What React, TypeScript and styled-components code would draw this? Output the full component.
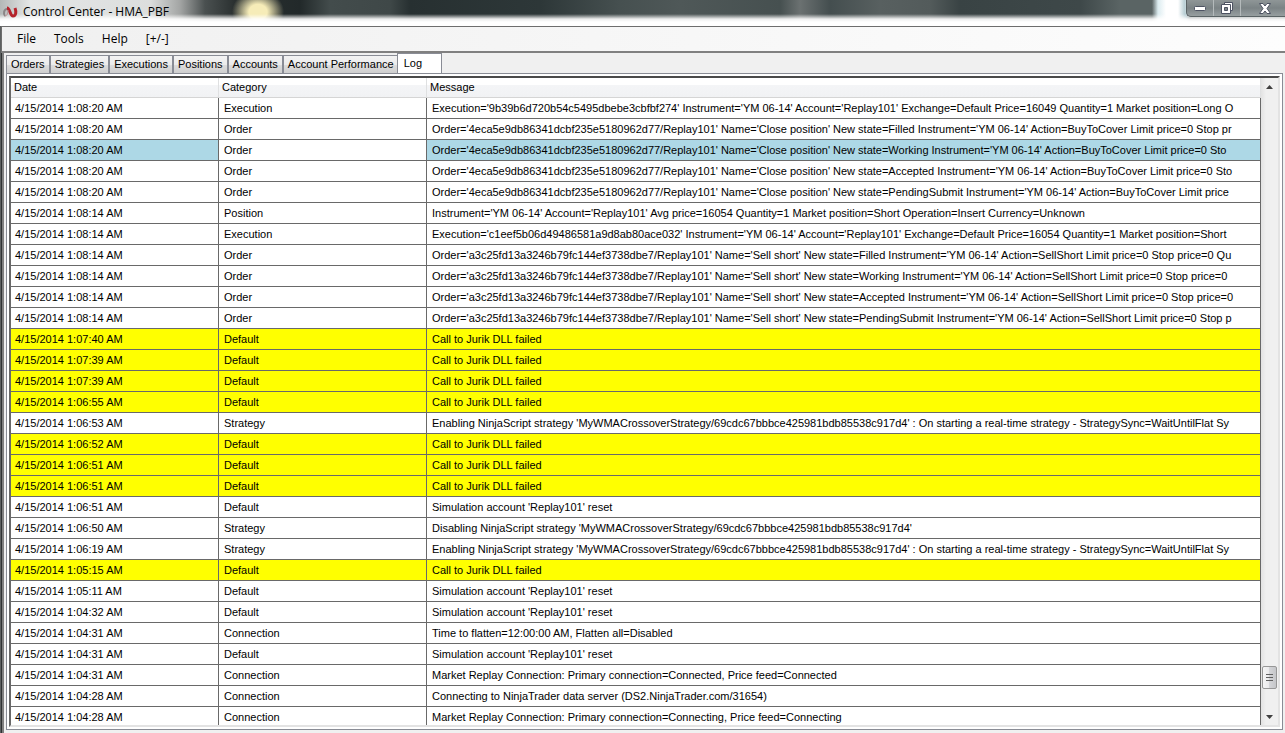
import React from 'react';
import styled, { createGlobalStyle } from 'styled-components';

const Global = createGlobalStyle`
  * { box-sizing: border-box; }
  html, body { margin: 0; padding: 0; }
  button { font: inherit; color: inherit; }
`;

const Window = styled.div`
  display: flex;
  flex-direction: column;
  height: 100vh;
  background: linear-gradient(to right, #8a8d8d 0, #2f3233 1px, #2f3233 2px, #f0f0f0 2px);
  color: #000;
  font: 11px/19px "Liberation Sans", Arial, sans-serif;
  overflow: hidden;
`;

const TitleBar = styled.header`
  flex: none;
  display: flex;
  justify-content: space-between;
  height: 26px;
  background:
    linear-gradient(to bottom, transparent 14px, rgba(255, 255, 255, 0.9) 19px, #fff 22px),
    radial-gradient(ellipse 26px 22px at 258px 12px, #f6ecb8 35%, transparent 100%),
    linear-gradient(to right, transparent 1152px, #dcecf0 1158px, #fff 1166px, #fff 1178px, #a9c4cb 1186px, transparent 1190px),
    linear-gradient(to right, #b4b8b7 0, #e4e6e6 30px, #dcdedd 150px, #a3a5a4 180px, #4a5050 205px, #2a3030 235px, #22292a 300px,
      #434c4c 330px, #3f4848 390px, #273031 410px, #2d3738 540px, #465050 620px, #4f5858 680px, #465050 780px,
      #6b7171 800px, #444e4f 830px, #586060 880px, #535b5b 930px, #394344 960px, #3e4849 1080px, #5a6464 1120px, #5a6464 1150px, #77807f 1285px);
`;

const Title = styled.h1`
  display: flex;
  align-items: center;
  gap: 5px;
  margin: 0;
  padding-left: 2px;
  height: 24px;
  font: 12px/24px "Open Sans", "Noto Sans", sans-serif;
`;

const Caption = styled.div`
  display: flex;
  height: 17px;
  border: 1px solid #5a6365;
  border-top: 0;
  border-right: 0;
  border-radius: 0 0 0 5px;
  box-shadow: 0 0 2px #fff;
  background: linear-gradient(to bottom, #8f9697, #7b8385 50%, #979fa0);
`;

const CaptionButton = styled.button<{ $wide?: boolean }>`
  display: flex;
  align-items: center;
  justify-content: center;
  width: ${(p) => (p.$wide ? '44px' : '27px')};
  padding: ${(p) => (p.$wide ? '0 0 0 3px' : '0')};
  border: 0;
  border-right: ${(p) => (p.$wide ? '0' : '1px solid #b4babb')};
  background: none;
`;

const MenuBar = styled.nav`
  flex: none;
  display: flex;
  align-items: center;
  gap: 18px;
  height: 27px;
  margin-left: 1px;
  padding-left: 15px;
  border: 1px solid #6d6d6d;
  border-right: 0;
  border-bottom: 2px solid #808080;
  background: linear-gradient(to right, #f0f0f0, #fdfdfd);
  font: 12px/18px "Open Sans", "Noto Sans", sans-serif;
`;

const MenuItem = styled.button`
  padding: 0;
  border: 0;
  background: none;
`;

const Workspace = styled.main`
  flex: 1;
  min-height: 0;
  display: flex;
  flex-direction: column;
  margin-left: 2px;
  padding: 0 2px 3px 2px;
  border-left: 2px solid #808080;
`;

const Tabs = styled.div`
  flex: none;
  display: flex;
  align-items: flex-end;
  height: 20px;
`;

const Tab = styled.button<{ $active?: boolean }>`
  height: ${(p) => (p.$active ? '20px' : '18px')};
  margin-left: ${(p) => (p.$active ? '-2px' : '0')};
  padding: ${(p) => (p.$active ? '0 19px 0 6px' : '0 4px')};
  border: 1px solid #898c95;
  border-bottom: 0;
  background: ${(p) => (p.$active ? '#fff' : 'linear-gradient(to bottom, #f3f3f3, #ebebeb 50%, #dddddd 50%, #cfcfcf)')};
  line-height: 17px;
  white-space: nowrap;
`;

const Pane = styled.section`
  flex: 1;
  min-height: 0;
  display: flex;
  padding: 2px;
  border: 1px solid #898c95;
  background: #fff;
`;

const Grid = styled.div`
  flex: 1;
  min-width: 0;
  display: flex;
  border: 2px solid #4a4a4a;
  border-top-color: #4a4a4a;
  border-left-color: #696969;
  border-right-color: #e3e3e3;
  border-bottom-color: #e3e3e3;
`;

const Scroller = styled.div`
  flex: 1;
  min-width: 0;
  overflow: hidden;
`;

const Table = styled.table`
  width: 100%;
  table-layout: fixed;
  border-collapse: separate;
  border-spacing: 0;
`;

const Col = styled.col<{ $w?: number }>`
  width: ${(p) => (p.$w ? p.$w + 'px' : 'auto')};
`;

const HeadCell = styled.th`
  height: 20px;
  padding: 0 3px;
  border-right: 1px solid #dfe0e1;
  border-bottom: 1px solid #d5d5d5;
  background: linear-gradient(to bottom, #fff 7px, #f4f5f7 7px, #f1f2f4);
  font-weight: normal;
  text-align: left;
`;

const Row = styled.tr<{ $tone?: 'warn' | 'selected' }>`
  background: ${(p) => (p.$tone === 'warn' ? '#ffff00' : p.$tone === 'selected' ? '#add8e6' : '#fff')};
`;

const Cell = styled.td<{ $plain?: boolean }>`
  height: 21px;
  padding: 0 5px;
  border-right: 1px solid #696969;
  border-bottom: 1px solid #696969;
  background: ${(p) => (p.$plain ? '#fff' : 'transparent')};
  white-space: nowrap;
  overflow: hidden;
  &:first-child { padding-left: 4px; }
`;

const ScrollBar = styled.div`
  flex: none;
  display: flex;
  flex-direction: column;
  align-items: center;
  width: 17px;
  background: linear-gradient(to right, #e3e3e3, #f0f0f0 5px, #f0f0f0);
`;

const Arrow = styled.button`
  display: flex;
  align-items: center;
  justify-content: center;
  width: 17px;
  height: 17px;
  padding: 0;
  border: 0;
  background: none;
`;

const Track = styled.div`
  flex: 1;
  display: flex;
  flex-direction: column;
  justify-content: flex-end;
  padding-bottom: 19px;
`;

const Thumb = styled.div`
  display: flex;
  align-items: center;
  justify-content: center;
  width: 15px;
  height: 23px;
  border: 1px solid #979797;
  border-radius: 2px;
  background: linear-gradient(to right, #f5f5f5, #e9e9eb 50%, #d4d5d8 50%, #c5c6c9);
`;

const E = 'Execution', O = 'Order', D = 'Default', S = 'Strategy', C = 'Connection';
const CLOSE = "Order='4eca5e9db86341dcbf235e5180962d77/Replay101' Name='Close position' New state=";
const SELL = "Order='a3c25fd13a3246b79fc144ef3738dbe7/Replay101' Name='Sell short' New state=";
const FAILED = 'Call to Jurik DLL failed';
const RESET = "Simulation account 'Replay101' reset";
const ENABLING = "Enabling NinjaScript strategy 'MyWMACrossoverStrategy/69cdc67bbbce425981bdb85538c917d4' : On starting a real-time strategy - StrategySync=WaitUntilFlat Sy";

const rows: [string, string, string][] = [
  ['1:08:20', E, "Execution='9b39b6d720b54c5495dbebe3cbfbf274' Instrument='YM 06-14' Account='Replay101' Exchange=Default Price=16049 Quantity=1 Market position=Long O"],
  ['1:08:20', O, CLOSE + "Filled Instrument='YM 06-14' Action=BuyToCover Limit price=0 Stop pr"],
  ['1:08:20', O, CLOSE + "Working Instrument='YM 06-14' Action=BuyToCover Limit price=0 Sto"],
  ['1:08:20', O, CLOSE + "Accepted Instrument='YM 06-14' Action=BuyToCover Limit price=0 Sto"],
  ['1:08:20', O, CLOSE + "PendingSubmit Instrument='YM 06-14' Action=BuyToCover Limit price"],
  ['1:08:14', 'Position', "Instrument='YM 06-14' Account='Replay101' Avg price=16054 Quantity=1 Market position=Short Operation=Insert Currency=Unknown"],
  ['1:08:14', E, "Execution='c1eef5b06d49486581a9d8ab80ace032' Instrument='YM 06-14' Account='Replay101' Exchange=Default Price=16054 Quantity=1 Market position=Short"],
  ['1:08:14', O, SELL + "Filled Instrument='YM 06-14' Action=SellShort Limit price=0 Stop price=0 Qu"],
  ['1:08:14', O, SELL + "Working Instrument='YM 06-14' Action=SellShort Limit price=0 Stop price=0"],
  ['1:08:14', O, SELL + "Accepted Instrument='YM 06-14' Action=SellShort Limit price=0 Stop price=0"],
  ['1:08:14', O, SELL + "PendingSubmit Instrument='YM 06-14' Action=SellShort Limit price=0 Stop p"],
  ['1:07:40', D, FAILED],
  ['1:07:39', D, FAILED],
  ['1:07:39', D, FAILED],
  ['1:06:55', D, FAILED],
  ['1:06:53', S, ENABLING],
  ['1:06:52', D, FAILED],
  ['1:06:51', D, FAILED],
  ['1:06:51', D, FAILED],
  ['1:06:51', D, RESET],
  ['1:06:50', S, "Disabling NinjaScript strategy 'MyWMACrossoverStrategy/69cdc67bbbce425981bdb85538c917d4'"],
  ['1:06:19', S, ENABLING],
  ['1:05:15', D, FAILED],
  ['1:05:11', D, RESET],
  ['1:04:32', D, RESET],
  ['1:04:31', C, 'Time to flatten=12:00:00 AM, Flatten all=Disabled'],
  ['1:04:31', D, RESET],
  ['1:04:31', C, 'Market Replay Connection: Primary connection=Connected, Price feed=Connected'],
  ['1:04:28', C, 'Connecting to NinjaTrader data server (DS2.NinjaTrader.com/31654)'],
  ['1:04:28', C, 'Market Replay Connection: Primary connection=Connecting, Price feed=Connecting'],
];

const SELECTED = 2;
const tabs = ['Orders', 'Strategies', 'Executions', 'Positions', 'Accounts', 'Account Performance', 'Log'];

const Logo = () => (
  <svg width="16" height="12" viewBox="0 0 16 12" fill="none" aria-hidden="true">
    <path d="M3 10C1 8 2 3 5 3S8 8 10 10" stroke="#8b8586" strokeWidth="2" />
    <path d="M5 2C8 2 8 10 11 10S14.500 6 13 2" stroke="#b5232b" strokeWidth="3" />
    <path d="M3 10C5 10 6 7 6 4" stroke="#b98a8c" strokeWidth="1" />
  </svg>
);

export default function App() {
  return (
    <>
      <Global />
      <Window>
        <TitleBar>
          <Title><Logo />Control Center - HMA_PBF</Title>
          <Caption>
            <CaptionButton aria-label="Minimize">
              <svg width="12" height="5" viewBox="0 0 12 5"><rect x=".5" y=".5" width="11" height="4" rx="1" fill="#fff" stroke="#4d5362" /></svg>
            </CaptionButton>
            <CaptionButton aria-label="Restore">
              <svg width="12" height="12" viewBox="0 0 12 12" stroke="#4d5362" fill="#fff">
                <path d="M3.500 .5H11.500V8.500H3.500Z" />
                <path d="M.5 2.500H9.500V11.500H.5Z" />
                <path d="M3.500 5.500H6.500V8.500H3.500Z" fill="#7f8789" />
              </svg>
            </CaptionButton>
            <CaptionButton $wide aria-label="Close">
              <svg width="12" height="11" viewBox="0 0 12 11"><path d="M.5 .5H4L6 3L8 .5H11.500L8 5.500L11.500 10.500H8L6 8L4 10.500H.5L4 5.500Z" fill="#fff" stroke="#4d5362" /></svg>
            </CaptionButton>
          </Caption>
        </TitleBar>
        <MenuBar>
          {['File', 'Tools', 'Help', '[+/-]'].map((m) => <MenuItem key={m}>{m}</MenuItem>)}
        </MenuBar>
        <Workspace>
          <Tabs role="tablist">
            {tabs.map((t) => <Tab key={t} role="tab" aria-selected={t === 'Log'} $active={t === 'Log'}>{t}</Tab>)}
          </Tabs>
          <Pane>
            <Grid>
              <Scroller>
                <Table>
                  <colgroup><Col $w={208} /><Col $w={208} /><Col /></colgroup>
                  <thead>
                    <tr><HeadCell>Date</HeadCell><HeadCell>Category</HeadCell><HeadCell>Message</HeadCell></tr>
                  </thead>
                  <tbody>
                    {rows.map(([time, category, message], i) => (
                      <Row key={i} $tone={message === FAILED ? 'warn' : i === SELECTED ? 'selected' : undefined}>
                        <Cell>4/15/2014 {time} AM</Cell>
                        <Cell $plain={i === SELECTED}>{category}</Cell>
                        <Cell>{message}</Cell>
                      </Row>
                    ))}
                  </tbody>
                </Table>
              </Scroller>
              <ScrollBar>
                <Arrow aria-label="Scroll up"><svg width="7" height="4" viewBox="0 0 7 4"><path d="M0 4L3.500 0L7 4Z" fill="#404040" /></svg></Arrow>
                <Track><Thumb><svg width="7" height="8" viewBox="0 0 7 8"><path d="M0 .5H7M0 3.500H7M0 6.500H7" stroke="#606060" /></svg></Thumb></Track>
                <Arrow aria-label="Scroll down"><svg width="7" height="4" viewBox="0 0 7 4"><path d="M0 0L3.500 4L7 0Z" fill="#404040" /></svg></Arrow>
              </ScrollBar>
            </Grid>
          </Pane>
        </Workspace>
      </Window>
    </>
  );
}
